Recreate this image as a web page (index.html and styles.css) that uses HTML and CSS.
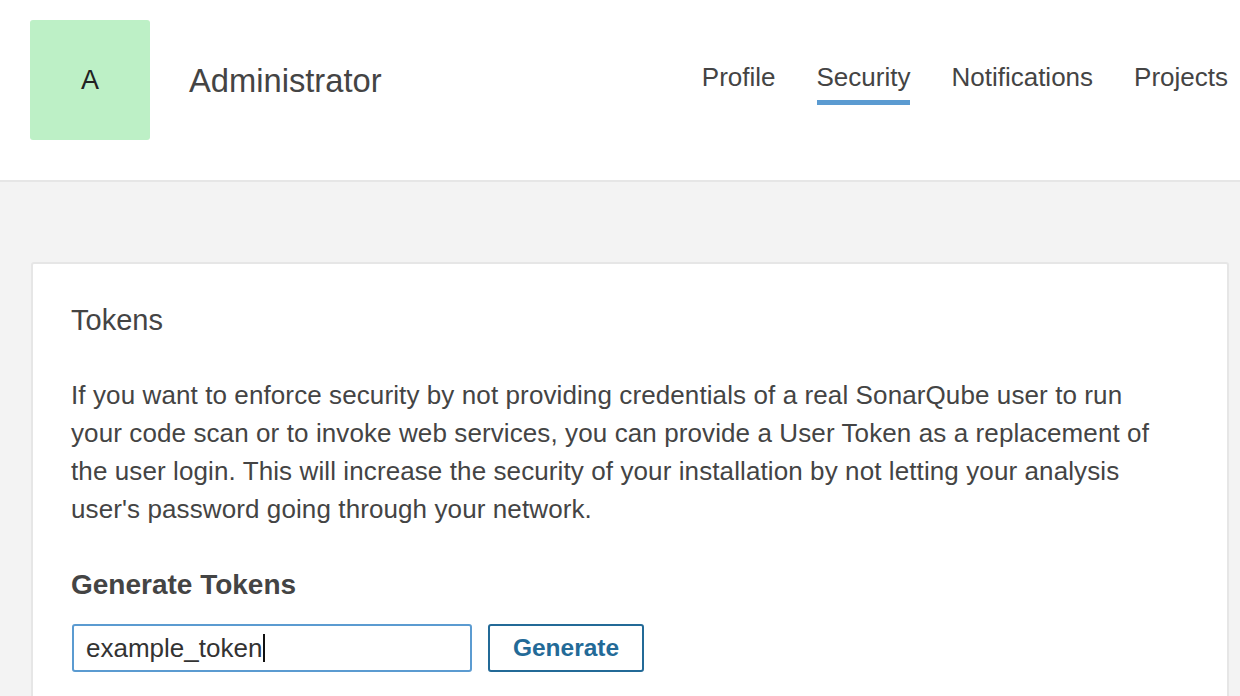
FILE: index.html
```html
<!DOCTYPE html>
<html lang="en">
<head>
<meta charset="utf-8">
<title>Security - Administrator</title>
<link rel="stylesheet" href="styles.css">
</head>
<body>
<header class="account-header">
  <div class="avatar">A</div>
  <h1 class="account-name">Administrator</h1>
  <nav class="account-nav">
    <a class="nav-item" href="#">Profile</a>
    <a class="nav-item active" href="#">Security</a>
    <a class="nav-item" href="#">Notifications</a>
    <a class="nav-item" href="#">Projects</a>
  </nav>
</header>
<main class="page">
  <section class="card">
    <h2 class="card-title">Tokens</h2>
    <p class="card-text">If you want to enforce security by not providing credentials of a real SonarQube user to run<br>your code scan or to invoke web services, you can provide a User Token as a replacement of<br>the user login. This will increase the security of your installation by not letting your analysis<br>user's password going through your network.</p>
    <h3 class="section-title">Generate Tokens</h3>
    <form class="token-form">
      <div class="token-input"><span>example_token</span><span class="caret"></span></div>
      <button class="btn" type="button">Generate</button>
    </form>
  </section>
</main>
</body>
</html>
```

FILE: styles.css
```css
html, body {
  margin: 0;
  padding: 0;
}
body {
  width: 1240px;
  height: 696px;
  overflow: hidden;
  background: #f3f3f3;
  font-family: "Liberation Sans", Arial, Helvetica, sans-serif;
  color: #333;
}
.account-header {
  display: flex;
  align-items: center;
  padding: 20px 12px 40px 30px;
  background: #fff;
  border-bottom: 2px solid #e6e6e6;
}
.avatar {
  flex: none;
  width: 120px;
  height: 120px;
  border-radius: 3px;
  background: #bdf0c6;
  color: #222;
  font-size: 27px;
  display: flex;
  align-items: center;
  justify-content: center;
}
.account-name {
  margin: 2px 0 0 39px;
  font-size: 32.7px;
  font-weight: normal;
  color: #444;
  line-height: 38px;
}
.account-nav {
  margin-left: auto;
  align-self: flex-start;
  margin-top: 44px;
  display: flex;
  gap: 41px;
}
.nav-item {
  font-size: 26px;
  line-height: 26px;
  color: #444;
  text-decoration: none;
  padding-bottom: 10px;
  border-bottom: 5px solid transparent;
}
.nav-item.active {
  border-bottom-color: #5b9bd1;
}
.page {
  padding: 80px 11px 0 31px;
}
.card {
  background: #fff;
  border: 2px solid #e6e6e6;
  border-radius: 3px;
  padding: 42px 40px 40px 38px;
}
.card-title {
  margin: 0;
  font-size: 29px;
  line-height: 29px;
  font-weight: normal;
  color: #444;
}
.card-text {
  margin: 41px 0 0;
  font-size: 26px;
  line-height: 38px;
  letter-spacing: 0.1px;
  color: #444;
}
.section-title {
  margin: 42px 0 0;
  font-size: 28px;
  line-height: 30px;
  font-weight: bold;
  color: #444;
}
.token-form {
  display: flex;
  gap: 16px;
  margin-top: 24px;
}
.token-input {
  width: 400px;
  height: 48px;
  box-sizing: border-box;
  border: 2px solid #5b9bd1;
  border-radius: 3px;
  padding: 0 12px;
  display: flex;
  align-items: center;
  font-size: 26px;
  color: #333;
  margin-left: 1px;
}
.caret {
  display: inline-block;
  width: 1.5px;
  height: 28px;
  background: #111;
  margin-left: 1px;
}
.btn {
  width: 156px;
  height: 48px;
  box-sizing: border-box;
  border: 2px solid #236a97;
  border-radius: 3px;
  background: #fff;
  color: #236a97;
  font-family: "Liberation Sans", Arial, Helvetica, sans-serif;
  font-size: 24.5px;
  font-weight: bold;
  padding: 0;
}
```
